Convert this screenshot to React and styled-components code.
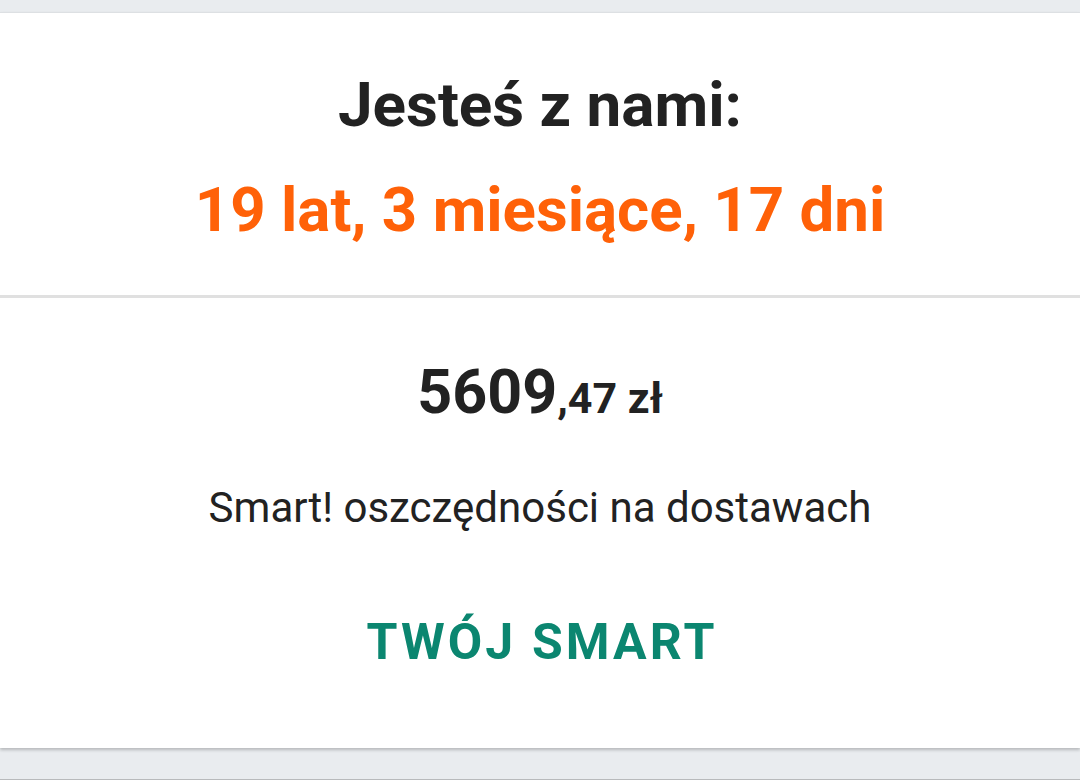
import React from "react";
import styled, { createGlobalStyle } from "styled-components";

const Global = createGlobalStyle`
  html, body { margin: 0; padding: 0; background: #e9ecef; }
  body { font-family: Roboto, "Noto Sans", sans-serif; }
`;

const Page = styled.div`
  width: 1080px;
  height: 780px;
  background: #e9ecef;
  box-sizing: border-box;
  padding-top: 12px;
  border-bottom: 1px solid #b8babc;
  overflow: hidden;
`;

const Card = styled.div`
  background: #fff;
  border-top: 1px solid #dde0e3;
  box-shadow: 0 2px 3px rgba(0, 0, 0, 0.22);
  display: flex;
  flex-direction: column;
`;

const Section = styled.section`
  display: flex;
  flex-direction: column;
  align-items: center;
  padding: ${(p) => p.$pad};
  & + & {
    border-top: 3px solid #e0e0e0;
  }
`;

const Title = styled.h1`
  margin: 0;
  font-size: 62px;
  line-height: 72px;
  font-weight: 700;
  color: #222;
`;

const Duration = styled.div`
  margin-top: ${(p) => p.$mt}px;
  font-size: 61.8px;
  line-height: 72px;
  font-weight: 700;
  color: #ff6108;
`;

const Amount = styled.div`
  font-weight: 700;
  color: #222;
  font-size: 61px;
  line-height: 72px;
`;

const Small = styled.span`
  font-size: 43px;
  line-height: 1;
`;

const Caption = styled.div`
  margin-top: 55px;
  font-size: 42px;
  line-height: 50px;
  color: #222;
`;

const LinkButton = styled.button`
  margin-top: 81px;
  border: 0;
  background: none;
  padding: 0 0 0 4px;
  font-family: Roboto, sans-serif;
  font-weight: 700;
  font-size: 50px;
  line-height: 56px;
  letter-spacing: 3.1px;
  color: #0b8670;
`;

export default function App() {
  return (
    <Page>
      <Global />
      <Card>
        <Section $pad="56px 0 49px">
          <Title>Jesteś z nami:</Title>
          <Duration $mt={33}>19 lat, 3 miesiące, 17 dni</Duration>
        </Section>
        <Section $pad="58px 0 78px">
          <Amount>
            5609<Small>,47 zł</Small>
          </Amount>
          <Caption>Smart! oszczędności na dostawach</Caption>
          <LinkButton>TWÓJ SMART</LinkButton>
        </Section>
      </Card>
    </Page>
  );
}
